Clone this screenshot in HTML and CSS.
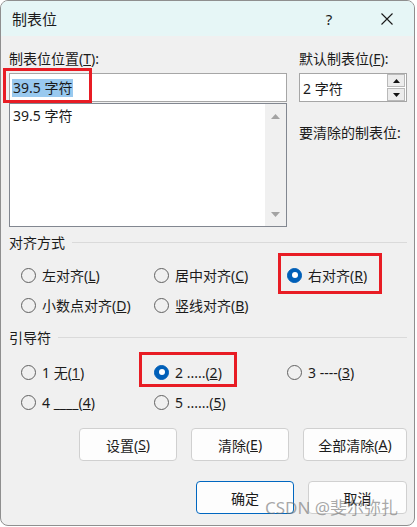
FILE: index.html
```html
<!DOCTYPE html>
<html lang="zh-CN">
<head>
<meta charset="utf-8">
<title>制表位</title>
<link rel="stylesheet" href="styles.css">
</head>
<body>
<div class="dialog">
  <div class="titlebar">
    <span class="title">制表位</span>
    <span class="help">?</span>
    <span class="close"><svg width="12" height="12" viewBox="0 0 12 12"><path d="M0.5 0.5L11.5 11.5M11.5 0.5L0.5 11.5" stroke="#1a1a1a" stroke-width="1.1" fill="none"/></svg></span>
  </div>
  <div class="content">
    <div class="top">
      <div class="left">
        <div class="label">制表位位置(<u>T</u>):</div>
        <div class="input-wrap">
          <div class="input"><span class="sel">39.5 字符</span></div>
          <div class="mark mark-input"></div>
        </div>
        <div class="list">
          <div class="list-items"><div class="item">39.5 字符</div></div>
          <div class="vscroll">
            <svg width="9" height="5" viewBox="0 0 9 5"><path d="M4.5 0L9 5H0Z" fill="#a3a3a3"/></svg>
            <svg width="9" height="5" viewBox="0 0 9 5"><path d="M0 0H9L4.5 5Z" fill="#a3a3a3"/></svg>
          </div>
        </div>
      </div>
      <div class="right">
        <div class="label">默认制表位(<u>F</u>):</div>
        <div class="spin">
          <span class="spin-text">2 字符</span>
          <div class="spin-btns">
            <div class="spin-btn"><svg width="7" height="4" viewBox="0 0 7 4"><path d="M3.5 0L7 4H0Z" fill="#111"/></svg></div>
            <div class="spin-btn"><svg width="7" height="4" viewBox="0 0 7 4"><path d="M0 0H7L3.5 4Z" fill="#111"/></svg></div>
          </div>
        </div>
        <div class="label clear-label">要清除的制表位:</div>
      </div>
    </div>

    <div class="group-head g1"><span>对齐方式</span><div class="rule"></div></div>
    <div class="radios r1">
      <div class="radio"><span class="dot"></span>左对齐(<u>L</u>)</div>
      <div class="radio"><span class="dot"></span>居中对齐(<u>C</u>)</div>
      <div class="radio"><span class="dot on"></span>右对齐(<u>R</u>)<div class="mark mark-right"></div></div>
      <div class="radio"><span class="dot"></span>小数点对齐(<u>D</u>)</div>
      <div class="radio"><span class="dot"></span>竖线对齐(<u>B</u>)</div>
    </div>

    <div class="group-head g2"><span>引导符</span><div class="rule"></div></div>
    <div class="radios r2">
      <div class="radio"><span class="dot"></span>1 无(<u>1</u>)</div>
      <div class="radio"><span class="dot on"></span>2 .....(<u>2</u>)<div class="mark mark-dots"></div></div>
      <div class="radio"><span class="dot"></span>3 ----(<u>3</u>)</div>
      <div class="radio"><span class="dot"></span>4 ____(<u>4</u>)</div>
      <div class="radio"><span class="dot"></span>5 ......(<u>5</u>)</div>
    </div>

    <div class="btn-row row1">
      <div class="btn">设置(<u>S</u>)</div>
      <div class="btn">清除(<u>E</u>)</div>
      <div class="btn wide">全部清除(<u>A</u>)</div>
    </div>
    <div class="btn-row row2">
      <div class="btn primary">确定</div>
      <div class="btn cancel">取消</div>
    </div>
  </div>
  <div class="watermark">CSDN @斐尔弥扎</div>
</div>
</body>
</html>
```

FILE: styles.css
```css
body {
  margin: 0;
  background: #ffffff;
  font-family: "Noto Sans", "Noto Sans CJK SC", sans-serif;
  font-size: 14px;
  color: #1b1b1b;
}

.dialog {
  width: 415px;
  height: 526px;
  box-sizing: border-box;
  border: 1px solid #8f8f8f;
  border-radius: 8px;
  background: #f0f0f0;
  position: relative;
  overflow: hidden;
  display: flex;
  flex-direction: column;
}

.titlebar {
  height: 35px;
  flex: none;
  background: #e6f6f6;
  display: flex;
  align-items: center;
  padding: 0 17px 0 11px;
}

.title {
  flex: 1;
  font-size: 15px;
}

.help {
  width: 20px;
  text-align: center;
  font-size: 15px;
  margin-right: 38px;
}

.close {
  width: 20px;
  display: flex;
  justify-content: center;
}

.content {
  padding: 0 7px 0 8px;
}

.top {
  display: flex;
  gap: 12px;
  margin-top: 14px;
}

.left {
  width: 278px;
}

.right {
  width: 108px;
}

.label {
  height: 18px;
  line-height: 18px;
  white-space: nowrap;
}

.input-wrap {
  position: relative;
  margin-top: 5px;
}

.input {
  height: 29px;
  box-sizing: border-box;
  border: 1px solid #a6a6a6;
  background: #ffffff;
  display: flex;
  align-items: center;
  padding-left: 2px;
}

.sel {
  background: #99c9ef;
  line-height: 18px;
  padding: 0 1px;
}

.mark {
  position: absolute;
  box-sizing: border-box;
  border: 3px solid #e81c24;
  pointer-events: none;
}

.mark-input {
  left: -6px;
  top: -5px;
  width: 89px;
  height: 35px;
}

.list {
  margin-top: 1px;
  height: 124px;
  box-sizing: border-box;
  border: 1px solid #828790;
  background: #ffffff;
  display: flex;
}

.list-items {
  flex: 1;
  padding: 3px 0 0 3px;
}

.item {
  line-height: 18px;
}

.vscroll {
  width: 21px;
  background: #f0f0f0;
  display: flex;
  flex-direction: column;
  justify-content: space-between;
  align-items: center;
  padding: 10px 0 9px;
  box-sizing: border-box;
}

.spin {
  margin-top: 5px;
  height: 29px;
  box-sizing: border-box;
  border: 1px solid #a6a6a6;
  background: #ffffff;
  display: flex;
  align-items: center;
  padding-left: 3px;
}

.spin-btns {
  margin-left: auto;
  margin-right: 1px;
  width: 18px;
  height: 27px;
  display: flex;
  flex-direction: column;
  gap: 1px;
}

.spin-btn {
  flex: 1;
  box-sizing: border-box;
  border: 1px solid #b9b9b9;
  background: #ececec;
  display: flex;
  align-items: center;
  justify-content: center;
}

.clear-label {
  margin-top: 22px;
}

.group-head {
  display: flex;
  align-items: center;
  gap: 7px;
  height: 18px;
  line-height: 18px;
}

.group-head .rule {
  flex: 1;
  height: 1px;
  background: #dadada;
  margin-top: -1px;
}

.g1 {
  margin-top: 7px;
}

.g2 {
  margin-top: 9px;
}

.radios {
  display: grid;
  grid-template-columns: 133px 133px 1fr;
  grid-auto-rows: 30px;
  padding-left: 12px;
}

.r1 {
  margin-top: 8px;
}

.r2 {
  margin-top: 10px;
}

.radio {
  position: relative;
  display: flex;
  align-items: center;
  white-space: nowrap;
}

.dot {
  width: 15px;
  height: 15px;
  box-sizing: border-box;
  border: 1px solid #616161;
  border-radius: 50%;
  margin-right: 6px;
  position: relative;
  flex: none;
}

.dot.on {
  background: #005fb8;
  border-color: #005fb8;
}

.dot.on::after {
  content: "";
  position: absolute;
  left: 3.5px;
  top: 3.5px;
  width: 6px;
  height: 6px;
  border-radius: 50%;
  background: #ffffff;
}

.mark-right {
  left: -9px;
  top: -7px;
  width: 104px;
  height: 41px;
}

.mark-dots {
  left: -15px;
  top: -5px;
  width: 98px;
  height: 35px;
}

.btn-row {
  display: flex;
  justify-content: flex-end;
  gap: 14px;
}

.row1 {
  margin-top: 11px;
}

.row2 {
  margin-top: 20px;
}

.btn {
  width: 98px;
  height: 33px;
  box-sizing: border-box;
  border: 1px solid #d0d0d0;
  border-radius: 4px;
  background: #fdfdfd;
  display: flex;
  align-items: center;
  justify-content: center;
}

.btn.wide {
  width: 104px;
}

.btn.cancel {
  width: 99px;
}

.btn.primary {
  border-color: #0067c0;
}

.watermark {
  position: absolute;
  left: 264px;
  top: 497px;
  font-size: 17px;
  line-height: 20px;
  color: rgba(110, 110, 110, 0.6);
  white-space: nowrap;
}
```
